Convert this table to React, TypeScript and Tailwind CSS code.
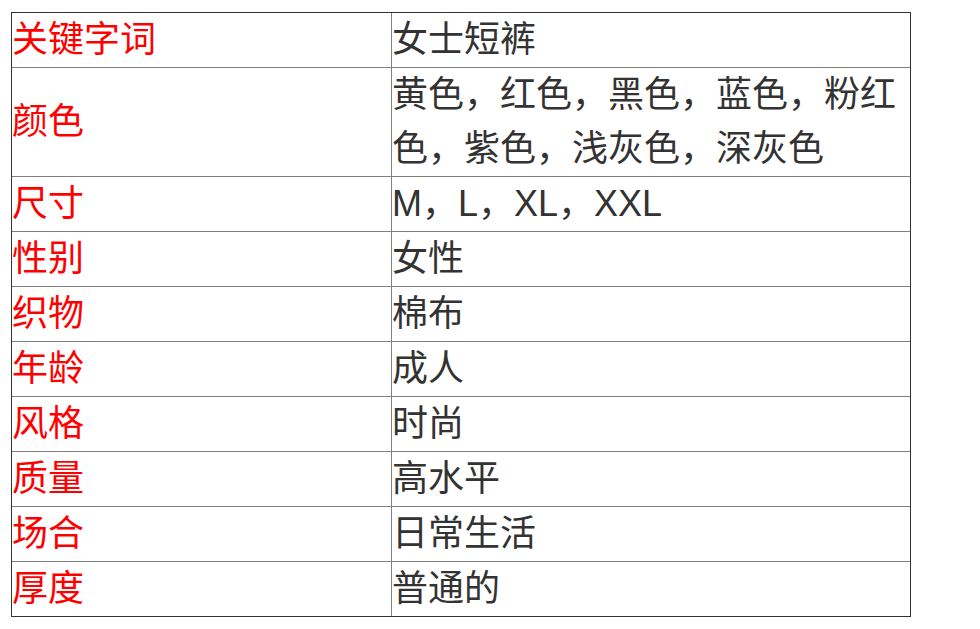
const rows: [string, string][] = [
  ["关键字词", "女士短裤"],
  ["颜色", "黄色，红色，黑色，蓝色，粉红色，紫色，浅灰色，深灰色"],
  ["尺寸", "M，L，XL，XXL"],
  ["性别", "女性"],
  ["织物", "棉布"],
  ["年龄", "成人"],
  ["风格", "时尚"],
  ["质量", "高水平"],
  ["场合", "日常生活"],
  ["厚度", "普通的"],
];

export default function App() {
  return (
    <div className="min-h-screen bg-white pl-[11px] pt-[12px] font-['Liberation_Sans','Noto_Sans_CJK_SC',sans-serif] text-[36px] leading-[54px]">
      <div className="w-[900px] border border-[#333]">
        {rows.map(([k, v], i) => (
          <div key={k} className={`flex ${i > 0 ? "border-t border-[#808080]" : ""}`}>
            <div className="flex w-[380px] shrink-0 items-center border-r border-[#808080] text-[#ff0000]">{k}</div>
            <div className="min-w-0 flex-1 pr-1 text-[#333]">{v}</div>
          </div>
        ))}
      </div>
    </div>
  );
}
